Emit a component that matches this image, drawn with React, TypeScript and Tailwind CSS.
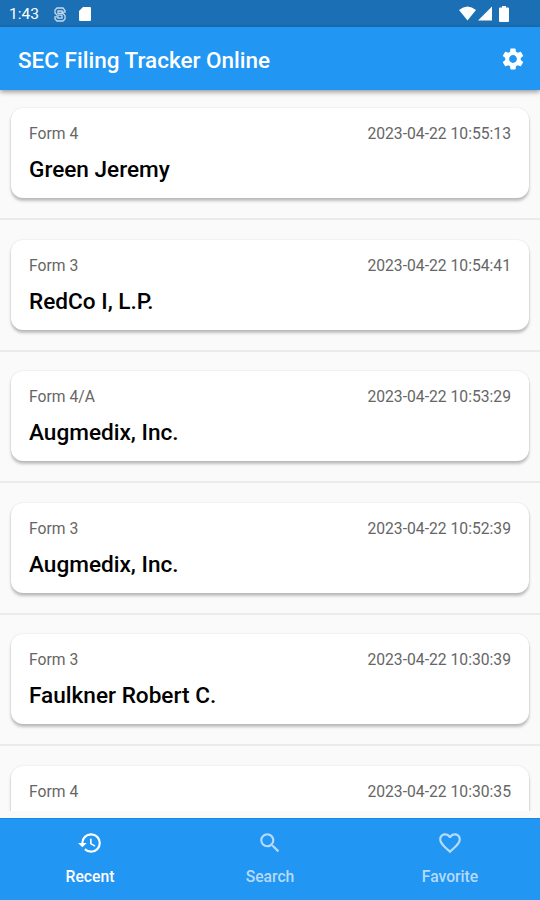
import React from "react";
import { MdSettings, MdHistory, MdSearch, MdFavoriteBorder } from "react-icons/md";

interface Filing {
  form: string;
  date: string;
  name: string;
}

const filings: Filing[] = [
  { form: "Form 4", date: "2023-04-22 10:55:13", name: "Green Jeremy" },
  { form: "Form 3", date: "2023-04-22 10:54:41", name: "RedCo I, L.P." },
  { form: "Form 4/A", date: "2023-04-22 10:53:29", name: "Augmedix, Inc." },
  { form: "Form 3", date: "2023-04-22 10:52:39", name: "Augmedix, Inc." },
  { form: "Form 3", date: "2023-04-22 10:30:39", name: "Faulkner Robert C." },
  { form: "Form 4", date: "2023-04-22 10:30:35", name: "" },
];

const tabs = [
  { label: "Recent", icon: MdHistory, active: true },
  { label: "Search", icon: MdSearch, active: false },
  { label: "Favorite", icon: MdFavoriteBorder, active: false },
];

function StatusBar() {
  return (
    <div className="flex h-[27px] shrink-0 items-center justify-between bg-[#1a6fb5] pl-[9px] pr-[30px] text-white">
      <div className="flex items-center pt-px">
        <span className="w-[45px] text-[15.5px] leading-5">1:43</span>
        {/* notification glyph: outlined S */}
        <svg className="h-[15px] w-3 opacity-75" viewBox="0 0 12 15" fill="none" stroke="currentColor" strokeWidth="1.3">
          <path d="M11 5.2V3.5L9 1H3L1 3v3l2 2.2h5v3H4V9.8H1V12l2 2h6l2-2V8.5L9 6.3H4V4h4v1.2z" />
        </svg>
        <svg className="ml-[13px] h-[14px] w-3" viewBox="0 0 12 14" fill="currentColor">
          <path d="M4 0h7q1 0 1 1v12q0 1-1 1H1q-1 0-1-1V4z" />
        </svg>
      </div>
      <div className="flex items-center">
        <svg className="h-[15px] w-[17px]" viewBox="0 0 17 15" fill="currentColor">
          <path d="M0 4Q8.500-3 17 4L8.500 14.500z" />
        </svg>
        <svg className="ml-[2px] h-[15px] w-[14px]" viewBox="0 0 14 15" fill="currentColor">
          <path d="M14 .5v14H0z" />
        </svg>
        <svg className="ml-[7px] mr-px h-[16px] w-[10px]" viewBox="0 0 10 16" fill="currentColor">
          <path d="M3 0h4v1.500h2q1 0 1 1V15q0 1-1 1H1q-1 0-1-1V2.500q0-1 1-1h2z" />
        </svg>
      </div>
    </div>
  );
}

function FilingCard({ filing }: { filing: Filing }) {
  return (
    <div className="h-[131.6px] shrink-0 px-[11px] pt-[18px]">
      <div className="h-[90px] rounded-xl bg-white px-[18px] pt-[14px] shadow-[0_3px_3px_rgba(0,0,0,0.24),0_0_2px_rgba(0,0,0,0.12)]">
        <div className="flex justify-between text-[15.7px] leading-6 text-[#666]">
          <span>{filing.form}</span>
          <span>{filing.date}</span>
        </div>
        <div className="mt-[9px] text-[22.6px] font-medium leading-[30px] text-black">{filing.name}</div>
      </div>
      <div className="-mx-[11px] mt-[20px] h-[2px] bg-[#ebebeb]" />
    </div>
  );
}

export default function App() {
  return (
    <div className="flex h-[900px] w-[540px] flex-col overflow-hidden bg-[#fafafa] font-[Roboto,sans-serif]">
      <StatusBar />
      <header className="z-10 flex h-[63px] shrink-0 items-center justify-between bg-[#2196f3] pl-[18px] pr-[14px] text-white shadow-[0_2px_5px_rgba(0,0,0,0.4)]">
        <h1 className="pt-[5px] text-[22.5px] font-medium">SEC Filing Tracker Online</h1>
        <MdSettings size={26} />
      </header>
      <main className="h-[721px] shrink-0 overflow-hidden">
        {filings.map((f) => (
          <FilingCard key={f.date} filing={f} />
        ))}
      </main>
      <nav className="mt-auto flex h-[82px] shrink-0 border-t border-[#1688e6] bg-[#2196f3]">
        {tabs.map(({ label, icon: Icon, active }) => (
          <div
            key={label}
            className={
              active
                ? "flex flex-1 flex-col items-center pt-[11px] text-white"
                : "flex flex-1 flex-col items-center pt-[11px] text-[#b5dbfb]"
            }
          >
            <Icon size={26} />
            <span className="mt-[9px] text-[15.7px] font-medium leading-6">{label}</span>
          </div>
        ))}
      </nav>
    </div>
  );
}
